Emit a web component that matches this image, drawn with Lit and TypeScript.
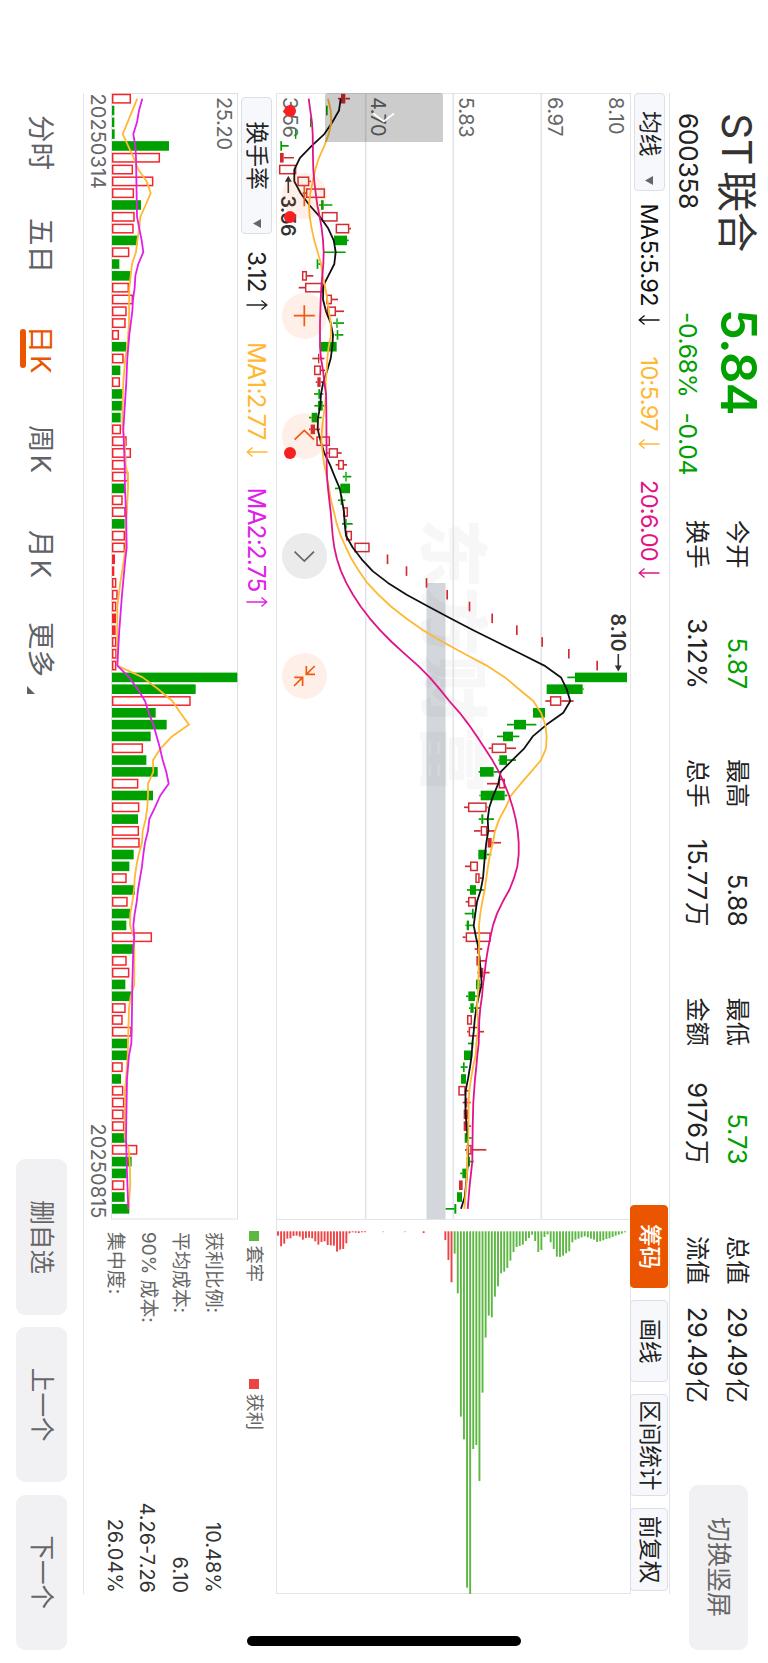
import { LitElement, html, svg, css } from "lit";
import { customElement, property } from "lit/decorators.js";

/* ---------- chart geometry ----------
   The board is laid out in landscape (1663 x 768) and turned a quarter.
   Series levels are stored in thirds of a pixel above the board's bottom edge. */
const BOARD_H = 768;
const FIRST = 98.7;
const STEP = 11.81;
const xAt = (i: number) => FIRST + i * STEP;
const yAt = (level: number) => BOARD_H - level / 3;

type Candle = [string, number, number, number, number];
/* kind (R hollow, S solid red, G green), low, body low, body high, high */
const lift = (base: number, rows: Candle[]): Candle[] =>
  rows.map(([k, a, b, c, d]) => [k, a + base, b + base, c + base, d + base] as Candle);

const CANDLES: Candle[] = [
  ...lift(780, [
    ["S", 234, 243, 256, 270], ["G", 198, 198, 203, 203], ["G", 150, 150, 154, 154], ["G", 105, 105, 109, 109],
    ["G", 61, 61, 66, 86], ["S", 60, 60, 71, 102], ["R", 57, 57, 109, 109], ["R", 112, 112, 148, 153],
    ["R", 128, 138, 195, 195], ["G", 177, 183, 191, 217], ["R", 185, 185, 233, 233], ["R", 227, 227, 268, 273],
    ["G", 222, 222, 261, 266], ["G", 190, 224, 228, 257], ["G", 170, 170, 175, 184], ["R", 126, 126, 141, 160],
    ["R", 116, 135, 189, 189], ["R", 199, 199, 216, 234], ["R", 201, 201, 228, 252], ["G", 219, 229, 233, 252],
    ["G", 224, 230, 235, 250], ["G", 182, 182, 230, 230], ["S", 157, 174, 178, 193], ["R", 162, 162, 183, 195],
    ["S", 167, 172, 182, 193], ["G", 162, 175, 180, 190], ["G", 163, 174, 188, 197], ["G", 147, 155, 172, 185],
    ["S", 147, 152, 165, 180], ["R", 169, 169, 210, 210], ["R", 200, 206, 234, 245], ["R", 227, 234, 252, 261],
    ["G", 248, 256, 260, 274], ["G", 225, 241, 270, 270], ["G", 234, 242, 247, 256], ["R", 249, 249, 264, 264],
    ["G", 246, 256, 260, 278], ["R", 258, 258, 276, 276], ["R", 283, 283, 329, 329], ["S", 380, 380, 385, 385],
    ["S", 437, 437, 442, 442],
  ]),
  ...lift(1230, [
    ["S", 47, 47, 52, 52], ["S", 109, 109, 114, 114], ["S", 176, 176, 181, 181], ["S", 244, 244, 249, 249],
    ["S", 318, 318, 323, 323], ["S", 394, 394, 399, 399], ["S", 474, 474, 479, 479], ["S", 559, 559, 564, 564],
    ["G", 472, 495, 651, 651], ["G", 410, 410, 518, 521], ["R", 406, 420, 454, 491], ["G", 369, 369, 405, 405],
    ["G", 291, 312, 348, 379], ["G", 261, 279, 309, 328], ["R", 236, 245, 289, 318], ["G", 265, 268, 291, 318],
    ["G", 206, 210, 251, 268], ["R", 231, 266, 285, 285], ["G", 208, 212, 284, 292], ["R", 162, 174, 230, 233],
    ["G", 206, 214, 220, 252], ["R", 192, 212, 232, 255], ["S", 233, 233, 245, 273], ["G", 204, 205, 230, 244],
    ["R", 165, 180, 204, 204], ["R", 196, 196, 209, 218],
  ]),
  ...lift(1200, [
    ["G", 201, 210, 228, 255], ["R", 197, 204, 228, 228], ["G", 194, 216, 221, 225], ["G", 196, 200, 207, 222],
    ["R", 188, 197, 272, 272], ["S", 224, 231, 240, 247], ["S", 229, 229, 241, 261], ["S", 232, 238, 250, 269],
    ["G", 228, 228, 239, 247], ["G", 198, 205, 225, 238], ["G", 207, 211, 221, 240], ["R", 201, 201, 216, 216],
    ["R", 201, 206, 238, 252], ["G", 204, 216, 220, 222], ["G", 192, 192, 214, 214], ["G", 182, 189, 194, 203],
    ["G", 183, 183, 198, 198], ["R", 175, 175, 197, 206], ["S", 188, 195, 202, 212], ["S", 191, 191, 204, 204],
    ["S", 191, 191, 203, 213], ["G", 194, 194, 206, 215], ["R", 195, 200, 215, 259], ["G", 200, 200, 210, 221],
    ["G", 181, 187, 198, 198], ["S", 177, 177, 188, 188], ["G", 171, 171, 186, 186], ["G", 137, 163, 169, 169],
  ]),
];

/* knots: flat list of index, level */
const knots = (base: number, flat: number[]) => {
  const out: string[] = [];
  for (let i = 0; i < flat.length; i += 2)
    out.push(`${xAt(flat[i]).toFixed(1)},${yAt(flat[i + 1] + base).toFixed(1)}`);
  return out.join(" ");
};

const MA5 = [
  knots(780, [0, 242, 1, 237, 2, 217, 3, 193, 4, 155, 5, 120, 6, 103, 7, 103, 8, 122, 9, 148, 10, 180, 11, 205, 12, 221, 13, 227,
    14, 223, 15, 205, 15.6, 194, 16, 190, 17, 189, 18, 198, 19, 212, 20, 219, 21, 217, 22, 212, 23, 202, 24, 190, 25, 183, 26, 181, 27, 174,
    28, 173, 29, 182, 30, 193, 31, 210, 32, 224, 33, 239, 34, 246, 35, 252, 36, 254, 37, 258, 38, 278, 39, 305, 40, 338]),
  knots(1230, [41, -66, 42, -10, 43, 55, 44, 121, 45, 190, 46, 261, 47, 332, 48, 403, 49, 453, 50, 470, 51, 481, 52, 460, 53, 410, 54, 368,
    55, 343, 56, 307, 57, 272, 58, 265, 59, 250, 60, 238, 61, 233, 62, 235, 63, 229, 64, 225, 65, 222, 66, 219]),
  knots(1200, [67, 242, 68, 231, 69, 226, 70, 221, 71, 228, 72, 236, 73, 239, 74, 243, 75, 245, 76, 236, 77, 229, 78, 224, 79, 221,
    80, 217, 81, 215, 82, 210, 83, 204, 84, 197, 85, 196, 86, 197, 87, 200, 88, 203, 89, 205, 90, 204, 91, 201, 92, 198, 93, 194, 94, 183]),
].join(" ");

const MA10 = [
  knots(780, [0, 204, 1, 212, 2, 214, 3, 206, 4, 193, 5, 177, 6, 166, 7, 158, 8, 151, 9, 147, 10, 149, 11, 155, 12, 163, 13, 173,
    14, 183, 15, 188, 16, 196, 17, 202, 18, 207, 19, 212, 20, 213, 21, 206, 22, 202, 23, 200, 24, 197, 25, 198, 26, 195, 27, 190, 28, 186,
    29, 184, 30, 188, 31, 193, 32, 200, 33, 207, 34, 213, 35, 222, 36, 230, 37, 242, 38, 258, 39, 275, 40, 297, 41, 322, 42, 355,
    43, 393, 44, 438, 45, 489, 46, 549]),
  knots(1230, [47, 163, 48, 230, 49, 285, 50, 327, 51, 370, 52, 393, 53, 406, 54, 410, 55, 408, 56, 393, 57, 363, 58, 332, 59, 303,
    60, 287, 61, 268, 62, 255, 63, 249, 64, 240, 65, 234, 66, 229]),
  knots(1200, [67, 254, 68, 247, 69, 241, 70, 237, 71, 238, 72, 237, 75, 235, 77, 231, 78, 234, 79, 234, 80, 229, 81, 227, 82, 219,
    83, 213, 84, 208, 85, 206, 88, 205, 89, 203, 91, 201, 92, 199, 93, 196, 94, 193]),
].join(" ");

const MA20 = [
  knots(780, [0, 146, 1, 151, 2, 156, 3, 158, 5, 159, 6, 160, 7, 163, 8, 167, 9, 172, 10, 179, 11, 185, 12, 189, 13, 191, 14, 190,
    15, 187, 16, 184, 17, 182, 19, 180, 21, 180, 22, 183, 23, 189, 24, 193, 25, 198, 26, 199, 31, 200, 32, 201, 33, 204, 34, 208,
    35, 212, 36, 215, 37, 218, 38, 223, 39, 231, 40, 243, 41, 259, 42, 279, 43, 302, 44, 329, 45, 360, 46, 395, 47, 434, 48, 474]),
  knots(1230, [49, 59, 50, 89, 51, 118, 52, 149, 53, 176, 54, 201, 55, 224, 56, 247, 57, 267, 58, 283, 59, 297, 60, 308, 61, 317,
    62, 323, 63, 326, 64, 326, 65, 322, 66, 312]),
  knots(1200, [67, 328, 68, 308, 69, 291, 70, 279, 71, 271, 72, 264, 73, 258, 74, 254, 75, 249, 76, 246, 77, 241, 78, 238, 80, 236,
    81, 232, 82, 229, 83, 225, 85, 220, 87, 218, 90, 217, 91, 213, 92, 209, 93, 206, 94, 203]),
].join(" ");

const VOLUMES =
  "R393 G343 G343 G344 G507 R480 R399 R460 R402 G423 R404 R401 G413 R388 G358 G391 R387 R399 R380 R377 R357 G379 R371 G361 R360 G368 G367 G362 R363 R380 R393 R376 R385 G375 R368 R377 G374 R375 R375 S345 S343 R349 R353 R349 S348 S347 R349 R350 R349 G712 G587 R572 G467 G500 G452 R429 G439 G473 R415 G459 R418 G414 R417 R419 G401 G388 R380 G405 R383 G390 G379 R456 G402 R380 R388 G376 G393 R377 R368 R395 G382 G382 R368 G363 R370 R373 R371 R373 G374 R412 G395 G380 R373 G374 G388"
    .split(" ").map((t) => ({ kind: t[0], top: +t.slice(1) }));

const VMA1 = knots(0, [0, 412, 3, 368, 5, 401, 6, 415, 7, 440, 8, 452, 9, 437, 10, 421, 11, 418, 12, 412, 13, 408, 14, 396, 15, 392, 16, 388,
  19, 387, 21, 382, 22, 376, 24, 370, 27, 367, 28, 368, 29, 374, 31, 377, 32, 384, 33, 384, 36, 379, 38, 377, 39, 372, 41, 361, 43, 352,
  48, 352, 49, 428, 50, 475, 51, 517, 52, 541, 53, 567, 54, 516, 55, 482, 56, 459, 57, 460, 58, 444, 59, 444, 60, 442, 61, 437, 62, 428,
  63, 426, 64, 416, 65, 409, 66, 404, 67, 402, 68, 397, 69, 391, 70, 390, 71, 402, 72, 403, 75, 403, 76, 392, 77, 387, 79, 385, 81, 383,
  83, 378, 84, 375, 88, 374, 89, 386, 90, 389, 92, 391, 93, 388, 94, 386]);
const VMA2 = knots(0, [0, 427, 1, 417, 2, 411, 3, 400, 4, 406, 5, 408, 10, 411, 11, 418, 12, 425, 13, 430, 14, 415, 15, 406, 16, 404, 17, 399,
  18, 397, 20, 388, 22, 382, 24, 379, 28, 370, 31, 374, 33, 375, 35, 378, 38, 380, 39, 376, 42, 366, 45, 358, 48, 352, 49, 388, 50, 413,
  51, 435, 52, 446, 53, 460, 54, 470, 55, 480, 56, 488, 57, 499, 58, 506, 59, 481, 60, 465, 61, 448, 62, 444, 63, 435, 64, 430, 65, 426,
  66, 420, 67, 414, 68, 410, 69, 404, 70, 400, 71, 403, 72, 400, 75, 397, 79, 395, 80, 394, 81, 387, 83, 381, 88, 378, 91, 381, 94, 385]);

const CHIPS_LOSS_LOW = [107, 139, 131, 116, 115, 108, 107, 110, 119, 114, 113, 115, 124, 134, 126, 124, 135, 136, 137, 155, 149, 147,
  130, 100, 97, 98, 99, 97, 96];
const CHIPS_RED_HIGH = [120, 180, 247];
const CHIPS_GREEN = [161, 280, 650, 718, 1163, 1182, 747, 735, 843, 578, 413, 347, 352, 290, 259, 220, 215, 204, 182, 156, 141, 138, 134,
  123, 114, 104, 123, 156, 150, 111, 103, 127, 147, 170, 171, 167, 160, 154, 127, 119, 116, 112, 109, 112, 116, 119, 126, 124, 121, 117,
  115, 111, 107, 104, 101, 97];

const candleShape = ([kind, lo, b, t, hi]: Candle, i: number) => {
  const x = xAt(i);
  const color = kind === "G" ? "#00a000" : "#d02c34";
  const top = yAt(t);
  const h = (t - b) / 3;
  const body = kind === "R"
    ? svg`<rect x=${x - 4.15} y=${top + 0.7} width="8.3" height=${Math.max(h - 1.4, 0.5)} fill="none" stroke=${color} stroke-width="1.5"/>`
    : svg`<rect x=${x - 4.8} y=${top} width="9.6" height=${h} fill=${color}/>`;
  return svg`
    ${hi > t ? svg`<line x1=${x} x2=${x} y1=${yAt(hi)} y2=${top} stroke=${color} stroke-width="1.7"/>` : ""}
    ${lo < b ? svg`<line x1=${x} x2=${x} y1=${yAt(b)} y2=${yAt(lo)} stroke=${color} stroke-width="1.7"/>` : ""}
    ${body}`;
};

const volumeShape = (v: { kind: string; top: number }, i: number) => {
  const x = xAt(i);
  const y = yAt(v.top);
  if (v.kind === "R")
    return svg`<rect x=${x - 4.2} y=${y + 0.7} width="8.4" height=${656 - y - 1.4} fill="none" stroke="#f2262b" stroke-width="1.5"/>`;
  return svg`<rect x=${x - 4.8} y=${y} width="9.6" height=${656 - y} fill=${v.kind === "G" ? "#00a000" : "#f2262b"}/>`;
};

const chipShape = (level: number, end: number, color: string) =>
  svg`<rect x="1231.3" y=${yAt(level) - 0.95} width=${Math.max((end - 94) / 3, 0.9)} height="1.9" fill=${color}/>`;

@customElement("trend-arrow")
class TrendArrow extends LitElement {
  @property() dir = "down";
  static styles = css`
    :host { display: block; width: 10px; height: 22px; }
    svg { display: block; }
  `;
  render() {
    return html`<svg width="10" height="22" viewBox="0 0 10 22" fill="none" stroke="currentColor" stroke-width="1.3">
      ${this.dir === "up"
        ? svg`<path d="M5 21.5V1.2M0.6 6.6L5 1.2L9.4 6.6"/>`
        : svg`<path d="M5 0.5V20.8M0.6 15.4L5 20.8L9.4 15.4"/>`}
    </svg>`;
  }
}

@customElement("price-chart")
class PriceChart extends LitElement {
  static styles = css`
    :host { display: block; }
    svg { display: block; }
    text { font-family: Inter, "Noto Sans CJK SC", sans-serif; }
    .axis { font-size: 20px; fill: #666; }
    .peak { font-size: 19.5px; font-weight: 600; fill: #333; }
    .mark { font-size: 70px; font-weight: 900; fill: #000; fill-opacity: 0.032; }
    .line { fill: none; stroke-width: 1.8; stroke-linejoin: round; }
  `;
  render() {
    const grid = [226.7, 314.7, 402.3];
    return html`<svg width="1501" height="354" viewBox="93 138 1501 354">
      <rect x="583" y="322.5" width="636" height="19" fill="#d3d6db"/>
      <text class="mark" x="518" y="341" textLength="276">东方财富</text>
      ${grid.map((y) => svg`<line x1="93" x2="1219" y1=${y} y2=${y} stroke="#e0e4ea" stroke-width="1.6"/>`)}
      <path d="M93.5 138V491.5H1593.5V138M1219.5 138V491.5" fill="none" stroke="#e2e4e9"/>
      ${([["8.10", 159.4, 37.5], ["6.97", 220.3, 39.5], ["5.83", 308.8, 40.5], ["4.70", 397, 39.5], ["3.56", 485, 41]] as [string, number, number][])
        .map(([t, y, w]) => svg`<text class="axis" x="97" y=${y} textLength=${w}>${t}</text>`)}
      ${CANDLES.map(candleShape)}
      <polyline class="line" stroke="#111" points=${MA5}/>
      <polyline class="line" stroke="#ffb833" points=${MA10}/>
      <polyline class="line" stroke="#e0148a" points=${MA20}/>
      <text class="peak" x="613.5" y="157.3" textLength="38">8.10</text>
      <path d="M654 149.7H667" stroke="#333" stroke-width="1.6"/><path d="M671.5 149.7L665.5 146.2V153.2Z" fill="#333"/>
      <text class="peak" x="195.5" y="487" textLength="41">3.56</text>
      <path d="M193 479.7H180" stroke="#333" stroke-width="1.6"/><path d="M175.7 479.7L181.7 476.2V483.2Z" fill="#333"/>
      ${CHIPS_LOSS_LOW.map((e, i) => chipShape(834 + i * 9.32, e, "#ec4444"))}
      ${[1150, 1215].map((l) => chipShape(l, 96, "#f3a0a0"))}
      ${chipShape(1271, 99, "#ec4444")}
      ${CHIPS_RED_HIGH.map((e, i) => chipShape(1336 + i * 9.3, e, "#ec4444"))}
      ${CHIPS_GREEN.map((e, i) => chipShape(1364 + i * 9.29, e, "#5cb843"))}
    </svg>`;
  }
}

@customElement("volume-chart")
class VolumeChart extends LitElement {
  static styles = css`
    :host { display: block; }
    svg { display: block; }
    text { font-family: Inter, sans-serif; font-size: 20px; fill: #666; }
    .line { fill: none; stroke-width: 1.8; stroke-linejoin: round; }
  `;
  render() {
    return html`<svg width="1127" height="154" viewBox="93 530 1127 154">
      <rect x="93.5" y="530.5" width="1125.5" height="126" fill="none" stroke="#dfe1e6"/>
      <text x="97" y="551" textLength="53">25.20</text>
      ${VOLUMES.map(volumeShape)}
      <polyline class="line" stroke="#ffb833" points=${VMA1}/>
      <polyline class="line" stroke="#e020e8" points=${VMA2}/>
      <text x="93.5" y="676.6" textLength="95.5">20250314</text>
      <text x="1123.5" y="676.6" textLength="95">20250815</text>
    </svg>`;
  }
}

@customElement("chart-controls")
class ChartControls extends LitElement {
  static styles = css`
    :host { display: block; }
    .row { display: flex; gap: 74.6px; }
    .knob { width: 45.4px; height: 45.4px; border-radius: 50%; background: rgba(240, 90, 0, 0.09); }
    .muted { background: #ebebeb; }
    svg { display: block; fill: none; stroke: #f0590e; stroke-width: 1.7; }
    .muted svg { stroke: #666; }
  `;
  render() {
    const icons = [
      "M-10.5 0H10.5", "M-10.5 0H10.5M0 -10.5V10.5", "M4 -9.7L-5.3 0L4 9.7", "M-4 -9.7L5.3 0L-4 9.7",
      "M-9.7 -2H-1.3V-10.7M-9.7 -10.5L-1.3 -2M1.7 10V1.7H10.3M10.3 10.3L1.7 1.7",
    ];
    return html`<div class="row">${icons.map((d, i) => html`
      <div class="knob ${i === 3 ? "muted" : ""}">
        <svg width="45.4" height="45.4" viewBox="-22.7 -22.7 45.4 45.4"><path d=${d}/></svg>
      </div>`)}</div>`;
  }
}

@customElement("app-root")
class AppRoot extends LitElement {
  static styles = css`
    :host { display: block; width: 768px; height: 1663px; overflow: hidden; background: #fff; }
    .board {
      width: 1663px; height: 768px; position: relative;
      transform: translateX(768px) rotate(90deg); transform-origin: 0 0;
      display: grid; grid-template-rows: 99px 39px 354px 193px 83px;
      font-family: Inter, "Noto Sans CJK SC", sans-serif; color: #222; white-space: nowrap;
      line-height: 1;
    }
    .board > * { box-sizing: border-box; }
    .head { display: flex; position: relative; padding-left: 113px; }
    .head::after { content: ""; position: absolute; left: 93px; width: 1501px; bottom: 0; height: 1px; background: #e2e4e8; }
    .name { width: 196px; }
    .title { font-size: 41px; line-height: 62px; letter-spacing: -0.3px; word-spacing: -5.5px; color: #333; }
    .code { font-size: 26px; line-height: 36px; letter-spacing: -0.1px; }
    .quote { width: 211px; color: #00a000; }
    .price { font-size: 49px; line-height: 60px; font-weight: 600; letter-spacing: -0.5px; }
    .delta { display: flex; gap: 15px; font-size: 24.5px; line-height: 40px; letter-spacing: -0.25px; padding-left: 3px; }
    .stats {
      display: grid; width: 882px; align-content: start; padding-top: 11px;
      grid-template-columns: 48px 121px 70px 48px 119.5px 71px 48px 119px 71.5px 48px 119px;
    }
    .stats > * { line-height: 39px; }
    .label { font-size: 24.3px; }
    .val { font-size: 25.5px; text-align: right; letter-spacing: -0.1px; }
    .unit { margin-left: 2px; font-size: 24.6px; }
    .l1 { grid-column: 1; } .v1 { grid-column: 2; } .l2 { grid-column: 4; } .v2 { grid-column: 5; }
    .l3 { grid-column: 7; } .v3 { grid-column: 8; } .l4 { grid-column: 10; } .v4 { grid-column: 11; }
    .green { color: #00a000; }
    .btn { display: flex; align-items: center; justify-content: center; background: #f1f1f4; border-radius: 9px; color: #666; }
    .switch { width: 165px; height: 59px; margin: 20px 0 0 82.5px; font-size: 25px; }
    .tools, .subtools { display: flex; align-items: center; }
    .tools { padding: 0 72.4px 0 93px; position: relative; }
    .tools::after { content: ""; position: absolute; left: 93px; width: 1501px; bottom: 0; height: 1px; background: #e2e4e8; }
    .select { box-sizing: border-box; display: flex; align-items: center; background: #f7f8fb; border: 1px solid #dcdfe6; border-radius: 4px; color: #222; font-size: 22.8px; }
    .select.main { width: 97.5px; height: 31px; padding-left: 17px; gap: 19px; margin-right: 13px; }
    .select.sub { width: 137px; height: 31px; padding-left: 23.5px; gap: 29px; margin: 0 17px 0 4px; }
    .tri { width: 9px; height: 8px; fill: #666; display: block; }
    .ma { display: flex; align-items: center; justify-content: space-between; font-size: 23.5px; letter-spacing: -0.65px; }
    .a5 { width: 121.5px; margin-right: 31.5px; color: #111; }
    .a10 { width: 92.5px; margin-right: 31px; color: #ffb833; }
    .a20 { width: 98px; color: #e0148a; }
    .tabs { display: flex; gap: 12.3px; margin-left: auto; position: relative; z-index: 1; }
    .tab { box-sizing: border-box; height: 38px; display: flex; align-items: center; justify-content: center; background: #f7f8fb; border: 1px solid #dcdfe6; border-radius: 4px; font-size: 22.6px; width: 82.2px; }
    .tab.wide { width: 101.7px; }
    .tab.on { background: #eb5500; border-color: #eb5500; color: #fff; font-weight: 500; }
    .plot { position: relative; padding-left: 93px; }
    .shade { position: absolute; left: 93px; top: 187px; width: 49px; height: 118px; background: rgba(0, 0, 0, 0.2); border-radius: 3px 0 0 3px; }
    .shade svg { display: block; }
    .controls { position: absolute; left: 173.3px; top: 302.6px; }
    .dot { position: absolute; top: 333.7px; width: 12px; height: 12px; border-radius: 50%; background: #f62020; }
    .d1 { left: 104.7px; } .d2 { left: 210.7px; } .d3 { left: 447px; }
    .lower { display: grid; grid-template-columns: 1127px 374px; margin-left: 93px; width: 1501px; border-bottom: 1px solid #e2e4e8; }
    .subtools { height: 38px; font-size: 24.5px; }
    .subtools .ma { font-size: 24.3px; letter-spacing: -0.8px; }
    .s0 { width: 59px; margin-right: 32px; }
    .s1 { width: 114.5px; margin-right: 31px; color: #ffb833; }
    .s2 { width: 119px; color: #e020e8; }
    .chips { padding-left: 11px; color: #666; }
    .legend { display: flex; height: 43px; align-items: center; font-size: 18.3px; }
    .sq { width: 10px; height: 10px; margin-right: 4.5px; background: #5cb843; }
    .sq.red { background: #ec4444; margin-left: 97px; }
    .costs { padding-top: 4px; }
    .cost { display: flex; justify-content: space-between; height: 32.7px; align-items: center; padding: 0 1px; font-size: 18.9px; }
    .cost b { font-weight: 400; font-size: 20px; color: #333; letter-spacing: 0; }
    .foot { display: flex; justify-content: space-between; padding: 0 13px 0 115px; }
    .nav { display: flex; color: #606266; font-size: 27.6px; line-height: 84px; }
    .nav > span { display: block; }
    .n1 { width: 103px; } .n2 { width: 107.5px; } .n3 { width: 99.5px; } .n4 { width: 105px; } .n5 { width: 92px; }
    .k { margin-left: 2px; }
    .active { color: #eb5500; position: relative; }
    .active::after { content: ""; position: absolute; left: 3.5px; top: 57px; width: 39px; height: 6px; border-radius: 3px; background: #eb5500; }
    .nav > .more { display: flex; }
    .corner { width: 8px; height: 8px; margin: 48px 0 0 9px; fill: #606266; }
    .actions { display: flex; gap: 12.2px; padding-top: 16px; }
    .actions .btn { width: 155.4px; height: 51px; font-size: 24.6px; }
    .home { position: absolute; left: 1636px; top: 247px; width: 10px; height: 273.5px; border-radius: 5px; background: #000; }
  `;

  stats = [
    ["今开", "5.87", "green", "换手", "3.12%"],
    ["最高", "5.88", "", "总手", "15.77万"],
    ["最低", "5.73", "green", "金额", "9176万"],
    ["总值", "29.49亿", "", "流值", "29.49亿"],
  ];
  costs = [["获利比例:", "10.48%"], ["平均成本:", "6.10"], ["90% 成本:", "4.26-7.26"], ["集中度:", "26.04%"]];

  amount(text: string) {
    const unit = text.match(/[万亿]$/)?.[0];
    return unit ? html`${text.slice(0, -1)}<span class="unit">${unit}</span>` : text;
  }

  render() {
    const tri = html`<svg class="tri" viewBox="0 0 9 8"><path d="M0 0H9L4.5 8Z"/></svg>`;
    return html`<div class="board">
      <header class="head">
        <div class="name"><div class="title">ST 联合</div><div class="code">600358</div></div>
        <div class="quote"><div class="price">5.84</div><div class="delta"><span>-0.68%</span><span>-0.04</span></div></div>
        <div class="stats">
          ${this.stats.map((s, i) => html`<span class="label l${i + 1}">${s[0]}</span><span class="val v${i + 1} ${s[2]}">${this.amount(s[1])}</span>`)}
          ${this.stats.map((s, i) => html`<span class="label l${i + 1}">${s[3]}</span><span class="val v${i + 1}">${this.amount(s[4])}</span>`)}
        </div>
        <div class="btn switch">切换竖屏</div>
      </header>
      <div class="tools">
        <div class="select main"><span>均线</span>${tri}</div>
        <div class="ma a5"><span>MA5:5.92</span><trend-arrow></trend-arrow></div>
        <div class="ma a10"><span>10:5.97</span><trend-arrow></trend-arrow></div>
        <div class="ma a20"><span>20:6.00</span><trend-arrow></trend-arrow></div>
        <div class="tabs">
          <div class="tab on">筹码</div><div class="tab">画线</div><div class="tab wide">区间统计</div><div class="tab">前复权</div>
        </div>
      </div>
      <div class="plot">
        <price-chart></price-chart>
        <div class="shade"><svg width="49" height="118" viewBox="0 0 49 118"><path d="M20.5 49L28.5 59.3L20.5 69.6" fill="none" stroke="#fff" stroke-width="1.6"/></svg></div>
        <chart-controls class="controls"></chart-controls>
        <i class="dot d1"></i><i class="dot d2"></i><i class="dot d3"></i>
      </div>
      <div class="lower">
        <div>
          <div class="subtools">
            <div class="select sub"><span>换手率</span>${tri}</div>
            <div class="ma s0"><span>3.12</span><trend-arrow dir="up"></trend-arrow></div>
            <div class="ma s1"><span>MA1:2.77</span><trend-arrow></trend-arrow></div>
            <div class="ma s2"><span>MA2:2.75</span><trend-arrow dir="up"></trend-arrow></div>
          </div>
          <volume-chart></volume-chart>
        </div>
        <div class="chips">
          <div class="legend"><i class="sq"></i>套牢<i class="sq red"></i>获利</div>
          <div class="costs">${this.costs.map(([l, v]) => html`<div class="cost"><span>${l}</span><b>${v}</b></div>`)}</div>
        </div>
      </div>
      <footer class="foot">
        <nav class="nav">
          <span class="n1">分时</span><span class="n2">五日</span>
          <span class="n3 active">日<span class="k">K</span></span><span class="n4">周<span class="k">K</span></span><span class="n5">月<span class="k">K</span></span>
          <span class="more">更多<svg class="corner" viewBox="0 0 8 8"><path d="M8 0V8H0Z"/></svg></span>
        </nav>
        <div class="actions"><div class="btn">删自选</div><div class="btn">上一个</div><div class="btn">下一个</div></div>
      </footer>
      <i class="home"></i>
    </div>`;
  }
}
